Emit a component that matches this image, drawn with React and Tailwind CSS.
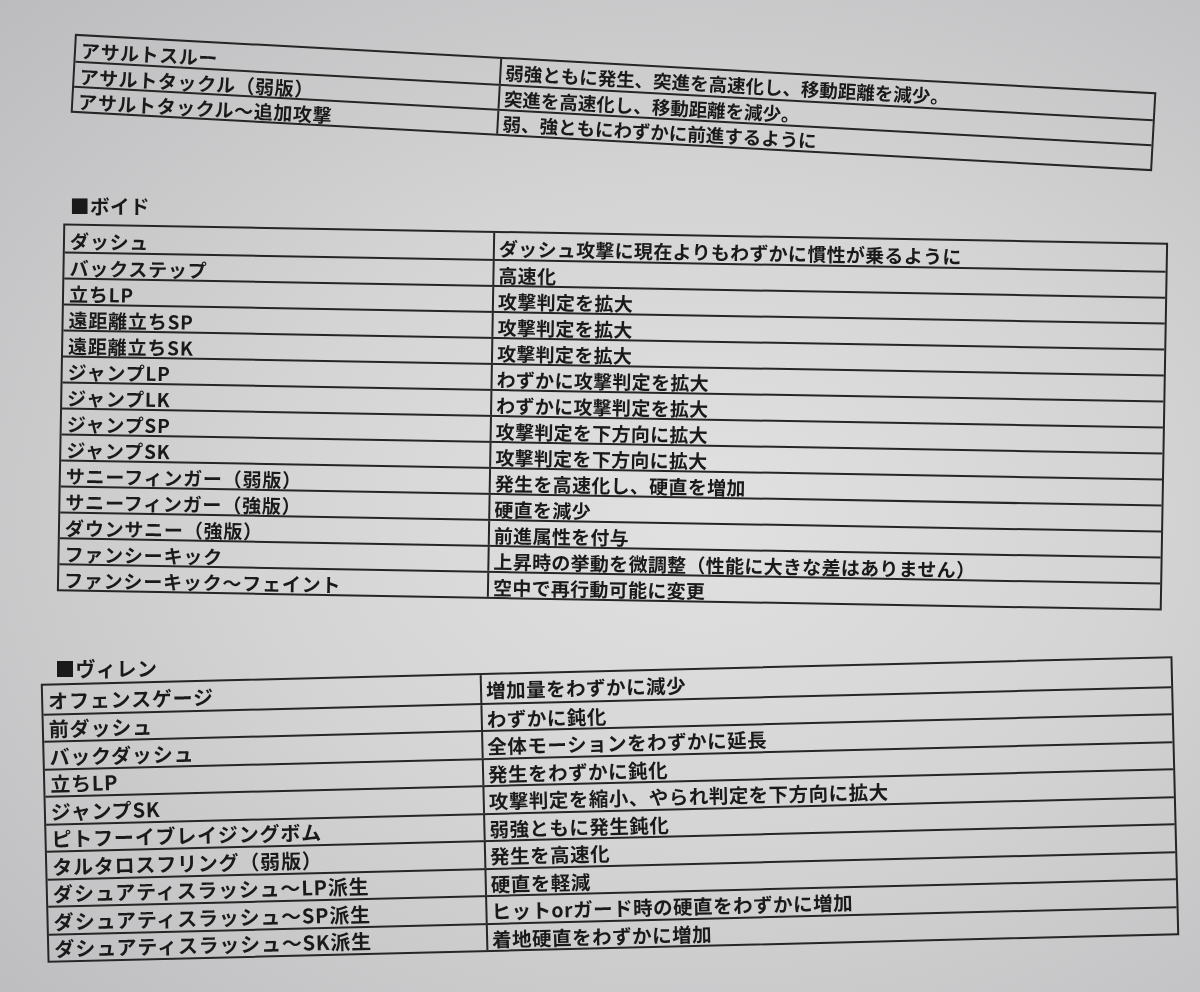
const assault = [
  ["アサルトスルー", "弱強ともに発生、突進を高速化し、移動距離を減少。"],
  ["アサルトタックル（弱版）", "突進を高速化し、移動距離を減少。"],
  ["アサルトタックル～追加攻撃", "弱、強ともにわずかに前進するように"],
];

const void_ = [
  ["ダッシュ", "ダッシュ攻撃に現在よりもわずかに慣性が乗るように"],
  ["バックステップ", "高速化"],
  ["立ちLP", "攻撃判定を拡大"],
  ["遠距離立ちSP", "攻撃判定を拡大"],
  ["遠距離立ちSK", "攻撃判定を拡大"],
  ["ジャンプLP", "わずかに攻撃判定を拡大"],
  ["ジャンプLK", "わずかに攻撃判定を拡大"],
  ["ジャンプSP", "攻撃判定を下方向に拡大"],
  ["ジャンプSK", "攻撃判定を下方向に拡大"],
  ["サニーフィンガー（弱版）", "発生を高速化し、硬直を増加"],
  ["サニーフィンガー（強版）", "硬直を減少"],
  ["ダウンサニー（強版）", "前進属性を付与"],
  ["ファンシーキック", "上昇時の挙動を微調整（性能に大きな差はありません）"],
  ["ファンシーキック～フェイント", "空中で再行動可能に変更"],
];

const villain = [
  ["オフェンスゲージ", "増加量をわずかに減少"],
  ["前ダッシュ", "わずかに鈍化"],
  ["バックダッシュ", "全体モーションをわずかに延長"],
  ["立ちLP", "発生をわずかに鈍化"],
  ["ジャンプSK", "攻撃判定を縮小、やられ判定を下方向に拡大"],
  ["ピトフーイブレイジングボム", "弱強ともに発生鈍化"],
  ["タルタロスフリング（弱版）", "発生を高速化"],
  ["ダシュアティスラッシュ～LP派生", "硬直を軽減"],
  ["ダシュアティスラッシュ～SP派生", "ヒットorガード時の硬直をわずかに増加"],
  ["ダシュアティスラッシュ～SK派生", "着地硬直をわずかに増加"],
];

// printed sheet photographed at a slight angle, so each table is tilted a bit
const Sheet = ({ rows, className, cols, rowClass, leftText, rightText }) => (
  <div className={`border-2 border-[#262626] ${className}`}>
    {rows.map(([move, change], i) => (
      <div
        key={i}
        className={`grid ${cols} ${rowClass} ${i > 0 ? "border-t-2 border-[#262626]" : ""}`}
      >
        <div className="flex items-center border-r-2 border-[#262626] pl-[5px] pt-[2px]">
          <span className={`whitespace-nowrap ${leftText}`}>{move}</span>
        </div>
        <div className="flex items-center pl-[4px] pt-[2px]">
          <span className={`whitespace-nowrap ${rightText}`}>{change}</span>
        </div>
      </div>
    ))}
  </div>
);

export default function App() {
  return (
    <div className="h-[992px] w-[1200px] overflow-hidden bg-[radial-gradient(ellipse_at_58%_52%,#e1e1e2_0%,#d4d4d5_45%,#bcbcbe_100%)] font-['Noto_Sans_CJK_JP','Noto_Sans_CJK_SC',sans-serif] font-semibold text-[#1a1a1a]">
      <div className="pl-[72px] pt-[63px] blur-[0.4px]">
        <Sheet
          rows={assault}
          className="w-[1083px] rotate-[3.1deg]"
          cols="grid-cols-[426px_1fr]"
          rowClass="h-[25px]"
          leftText="text-[19px] leading-none tracking-[0.6px]"
          rightText="text-[18.5px] leading-none"
        />
      </div>

      <div className="mt-[54px] pl-[70px] text-[19.5px] leading-[20px] tracking-[0.5px] blur-[0.4px]">■ボイド</div>

      <div className="mt-[17px] pl-[60px] blur-[0.4px]">
        <Sheet
          rows={void_}
          className="w-[1105px] rotate-[1deg]"
          cols="grid-cols-[430px_1fr]"
          rowClass="h-[26px]"
          leftText="text-[19px] leading-none tracking-[0.8px]"
          rightText="text-[19px] leading-none tracking-[0.3px]"
        />
      </div>

      <div className="mt-[58px] pl-[55px] text-[20px] leading-[20px] tracking-[0.5px] blur-[0.4px]">■ヴィレン</div>

      <div className="mt-[-9px] pl-[44px] blur-[0.4px]">
        <Sheet
          rows={villain}
          className="w-[1132px] -rotate-[1.4deg]"
          cols="grid-cols-[439px_1fr]"
          rowClass="h-[27.5px]"
          leftText="text-[20px] leading-none tracking-[0.8px]"
          rightText="text-[19.5px] leading-none tracking-[0.5px]"
        />
      </div>
    </div>
  );
}
